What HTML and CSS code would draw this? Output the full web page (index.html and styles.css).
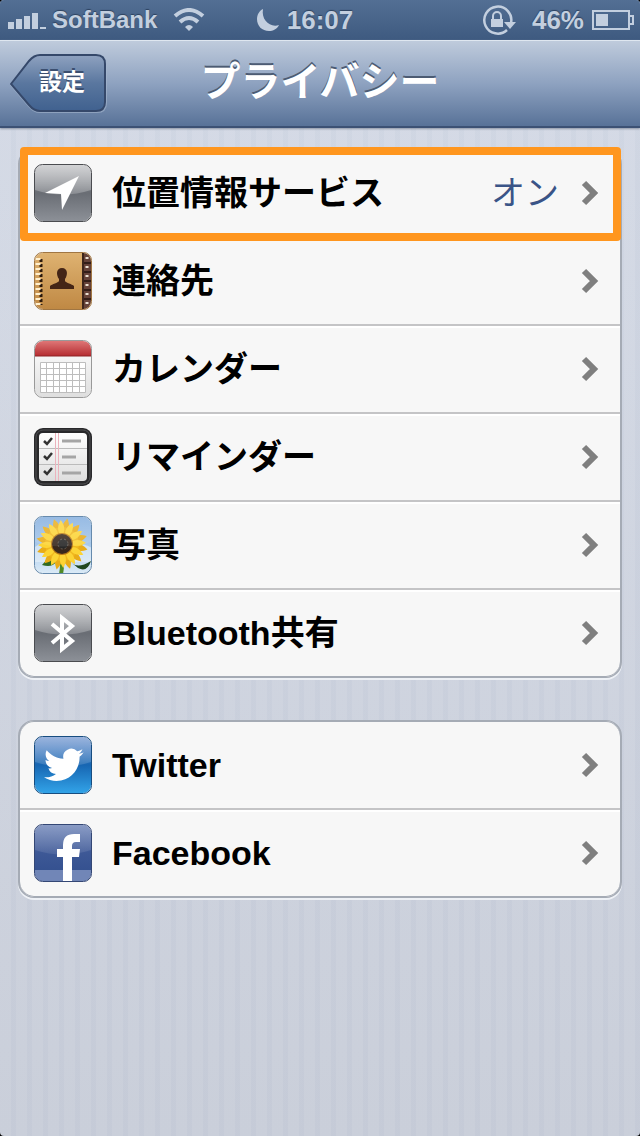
FILE: index.html
```html
<!DOCTYPE html>
<html lang="ja">
<head>
	<meta charset="UTF-8">
	<meta name="viewport" content="width=device-width, initial-scale=1.0">
	<link rel="stylesheet" href="styles.css">
	<title>プライバシー</title>
</head>
<body>
<svg class="defs" width="0" height="0" aria-hidden="true">
	<defs>
		<linearGradient id="gray" x2="0" y2="1"><stop offset="0" stop-color="#a5a7ab"/><stop offset=".5" stop-color="#696d74"/><stop offset="1" stop-color="#8c9097"/></linearGradient>
		<linearGradient id="gloss" x2="0" y2="1"><stop offset="0" stop-color="#fff" stop-opacity=".5"/><stop offset="1" stop-color="#fff" stop-opacity=".22"/></linearGradient>
		<linearGradient id="leather" x2="0" y2="1"><stop offset="0" stop-color="#dfb372"/><stop offset="1" stop-color="#bf8843"/></linearGradient>
		<linearGradient id="red" x2="0" y2="1"><stop offset="0" stop-color="#e17b7b"/><stop offset="1" stop-color="#b52c30"/></linearGradient>
		<linearGradient id="paper" x2="0" y2="1"><stop offset="0" stop-color="#fff"/><stop offset="1" stop-color="#dedede"/></linearGradient>
		<linearGradient id="sky" x2="0" y2="1"><stop offset="0" stop-color="#7da9dc"/><stop offset=".6" stop-color="#b2d0ee"/><stop offset="1" stop-color="#dcebf7"/></linearGradient>
		<linearGradient id="tw" x2="0" y2="1"><stop offset="0" stop-color="#6f93cf"/><stop offset=".5" stop-color="#1766b2"/><stop offset="1" stop-color="#32a3e8"/></linearGradient>
		<linearGradient id="fb" x2="0" y2="1"><stop offset="0" stop-color="#6e84b8"/><stop offset=".5" stop-color="#3d5896"/><stop offset="1" stop-color="#304d8c"/></linearGradient>
		<linearGradient id="back" x2="0" y2="1"><stop offset="0" stop-color="#8fa2c0"/><stop offset=".5" stop-color="#5a779f"/><stop offset="1" stop-color="#40618f"/></linearGradient>
		<path id="shine" d="M1 8a7 7 0 0 1 7-7h42a7 7 0 0 1 7 7v18Q29 35 1 26z" fill="url(#gloss)"/>
		<path id="petal" d="M0-8C-5-14-4-20 0-26 4-20 5-14 0-8z"/>
		<clipPath id="tile"><rect x="1" y="1" width="56" height="56" rx="8"/></clipPath>
	</defs>
</svg>
<div class="page">
	<div class="status">
		<div class="status-left">
			<svg width="38" height="20" viewBox="0 0 38 20"><path d="M0 12h6v7H0zM8 9h6v10H8zM16 6h6v13h-6zM24 3h6v16h-6zM32 17h6v2h-6z"/></svg>
			<span class="carrier">SoftBank</span>
			<svg width="32" height="24" viewBox="0 0 32 24"><path d="M16 23l-4-4q4-4 8 0z"/><g fill="none" stroke="#c3cfdf" stroke-width="4"><path d="M2 8Q16-4 30 8"/><path d="M7 14q9-8 18 0"/></g></svg>
		</div>
		<div class="status-mid">
			<svg width="22" height="22" viewBox="0 0 22 22"><path d="M6 0C2 2 0 6 0 10c0 7 5 12 12 12 4 0 8-2 10-6C13 19 4 11 6 0z"/></svg>
			<span>16:07</span>
		</div>
		<div class="status-right">
			<svg width="34" height="30" viewBox="0 0 34 30"><path d="M29 18A13.500 13.500 0 1 0 25 25" fill="none" stroke="#c3cfdf" stroke-width="2.500"/><path d="M22 17h12l-6 7z"/><path d="M9 14h12v8H9z"/><path d="M11 15v-4a4 4 0 0 1 8 0v4" fill="none" stroke="#c3cfdf" stroke-width="2"/></svg>
			<span>46%</span>
			<svg width="42" height="20" viewBox="0 0 42 20"><path d="M1 1h36v18H1zM38 6h3v8h-3" fill="none" stroke="#c3cfdf" stroke-width="2"/><path d="M4 4h12v12H4z"/></svg>
		</div>
	</div>
	<header class="navbar">
		<button class="back" type="button">
			<svg class="back-shape" width="98" height="60" viewBox="0 0 98 60"><path d="M1 31L19 8Q24 2 30 2h57q9 0 9 9v38q0 9-9 9H30q-6 0-11-6z" fill="none" stroke="#a6b7ce" stroke-opacity=".6" stroke-width="2"/><path d="M1 30L19 7Q24 1 30 1h56q9 0 9 9v38q0 9-9 9H30q-6 0-11-6z" fill="url(#back)" stroke="#35486a" stroke-width="2"/></svg>
			<span>設定</span>
		</button>
		<h1>プライバシー</h1>
	</header>
	<main>
		<nav class="group">
			<a class="row marked" href="#location">
				<svg class="icon" viewBox="0 0 58 58"><rect x="1" y="1" width="56" height="56" rx="8" fill="url(#gray)"/><use href="#shine"/><rect x=".5" y=".5" width="57" height="57" rx="8" fill="none" stroke="#4a4c50"/><path d="M45 12L28 46l-1-16-16-1z" fill="#fff"/></svg>
				<span class="name">位置情報サービス</span>
				<span class="value">オン</span>
				<svg class="arrow" viewBox="0 0 18 26"><path d="M3 3l10 10L3 23"/></svg>
			</a>
			<a class="row" href="#contacts">
				<svg class="icon" viewBox="0 0 58 58"><g clip-path="url(#tile)"><path d="M0 0h58v58H0z" fill="url(#leather)"/><path d="M49 0h9v58h-9z" fill="#654239"/><path d="M48 0h2v58h-2z" fill="#3d251b"/><path d="M50 11h8M50 20h8M50 29h8M50 38h8M50 47h8" stroke="#321d18" stroke-width="2"/><path d="M53 5v48" stroke="#eadfd2" stroke-width="3" stroke-dasharray="2 7"/></g><path d="M7 7v46" stroke="#2d1a0c" stroke-width="3" stroke-dasharray="3 2"/><path d="M4 6v47" stroke="#fff0cf" stroke-width="5" stroke-dasharray="2 3"/><path d="M16 37v-3c2-2 8-3 9-5v-2c-3-4-3-11 3-11s6 7 3 11v2c1 2 7 3 9 5v3z" fill="#442516"/><rect x=".5" y=".5" width="57" height="57" rx="8" fill="none" stroke="#a07643"/></svg>
				<span class="name">連絡先</span>
				<svg class="arrow" viewBox="0 0 18 26"><path d="M3 3l10 10L3 23"/></svg>
			</a>
			<a class="row" href="#calendar">
				<svg class="icon" viewBox="0 0 58 58"><g clip-path="url(#tile)"><path d="M0 0h58v58H0z" fill="url(#paper)"/><path d="M0 0h58v16H0z" fill="url(#red)"/><path d="M0 16h58" stroke="#8e2427"/></g><path d="M6.500 22.500h45v30h-45z" fill="#fff"/><path d="M6.500 22.500h45v30h-45zM6 28.500h45M6 34.500h45M6 40.500h45M6 46.500h45M12.500 22v30M19.500 22v30M25.500 22v30M32.500 22v30M38.500 22v30M45.500 22v30" fill="none" stroke="#bdbdbd"/><rect x=".5" y=".5" width="57" height="57" rx="8" fill="none" stroke="#999"/></svg>
				<span class="name">カレンダー</span>
				<svg class="arrow" viewBox="0 0 18 26"><path d="M3 3l10 10L3 23"/></svg>
			</a>
			<a class="row" href="#reminders">
				<svg class="icon" viewBox="0 0 58 58"><rect width="58" height="58" rx="9" fill="#29292b"/><rect x="2" y="2" width="54" height="54" rx="7" fill="none" stroke="#505053"/><rect x="5" y="5" width="48" height="48" rx="4" fill="url(#paper)"/><path d="M5 20.500h48M5 36.500h48" stroke="#bbb"/><path d="M21.500 5v48M24.500 5v48" stroke="#ecb3bd"/><path d="M28 13h19M28 29h14M28 45h19" stroke="#a5a5a5" stroke-width="3"/><path d="M10 13l3 3 5-6M10 28l3 3 5-6M10 43l3 3 5-6" fill="none" stroke="#333" stroke-width="2.500"/></svg>
				<span class="name">リマインダー</span>
				<svg class="arrow" viewBox="0 0 18 26"><path d="M3 3l10 10L3 23"/></svg>
			</a>
			<a class="row" href="#photos">
				<svg class="icon" viewBox="0 0 58 58"><g clip-path="url(#tile)"><path d="M0 0h58v58H0z" fill="url(#sky)"/><path d="M0 32q8-8 15-1t18 0 25 1v14H0z" fill="#e8f2fa" opacity=".6"/><path d="M27 40q2 8 0 18" fill="none" stroke="#4f8a25" stroke-width="4"/><path d="M26 48q-5-10-12-7-3 5-6 8 10 3 14-3z" fill="#2f6a22"/><path d="M38 47q6 6 19-2-4 12-13 7z" fill="#20481f"/>
					<g transform="translate(28 28)"><g fill="#e9ac18"><use href="#petal" transform="rotate(12)"/><use href="#petal" transform="rotate(42)"/><use href="#petal" transform="rotate(72)"/><use href="#petal" transform="rotate(102)"/><use href="#petal" transform="rotate(132)"/><use href="#petal" transform="rotate(162)"/><use href="#petal" transform="rotate(192)"/><use href="#petal" transform="rotate(222)"/><use href="#petal" transform="rotate(252)"/><use href="#petal" transform="rotate(282)"/><use href="#petal" transform="rotate(312)"/><use href="#petal" transform="rotate(342)"/></g>
					<circle r="17" fill="#f0b81f"/>
					<g fill="#fcd435" transform="scale(.92)"><use href="#petal" transform="rotate(-3)"/><use href="#petal" transform="rotate(27)"/><use href="#petal" transform="rotate(57)"/><use href="#petal" transform="rotate(87)"/><use href="#petal" transform="rotate(117)"/><use href="#petal" transform="rotate(147)"/><use href="#petal" transform="rotate(177)"/><use href="#petal" transform="rotate(207)"/><use href="#petal" transform="rotate(237)"/><use href="#petal" transform="rotate(267)"/><use href="#petal" transform="rotate(297)"/><use href="#petal" transform="rotate(327)"/></g>
					<circle r="11" fill="#b87918"/><circle r="10" fill="#38281d"/><circle cx="1" r="5" fill="#282828" stroke="#696057" stroke-dasharray="2 2"/></g></g><use href="#shine" opacity=".4"/><rect x=".5" y=".5" width="57" height="57" rx="8" fill="none" stroke="#668aad"/></svg>
				<span class="name">写真</span>
				<svg class="arrow" viewBox="0 0 18 26"><path d="M3 3l10 10L3 23"/></svg>
			</a>
			<a class="row" href="#bluetooth">
				<svg class="icon" viewBox="0 0 58 58"><rect x="1" y="1" width="56" height="56" rx="8" fill="url(#gray)"/><use href="#shine"/><rect x=".5" y=".5" width="57" height="57" rx="8" fill="none" stroke="#4a4c50"/><path d="M18 20l20 17-10 8V14l10 8-20 17" fill="none" stroke="#fff" stroke-width="4"/></svg>
				<span class="name">Bluetooth共有</span>
				<svg class="arrow" viewBox="0 0 18 26"><path d="M3 3l10 10L3 23"/></svg>
			</a>
		</nav>
		<nav class="group">
			<a class="row" href="#twitter">
				<svg class="icon" viewBox="0 0 58 58"><rect x="1" y="1" width="56" height="56" rx="8" fill="url(#tw)"/><use href="#shine" opacity=".6"/><rect x=".5" y=".5" width="57" height="57" rx="8" fill="none" stroke="#174d80"/><path transform="translate(10 9) scale(1.650)" fill="#fff" d="M23.953 4.570a10 10 0 0 1-2.825.775 4.958 4.958 0 0 0 2.163-2.723c-.951.555-2.005.959-3.127 1.184a4.920 4.920 0 0 0-8.384 4.482C7.690 8.095 4.067 6.130 1.640 3.162a4.822 4.822 0 0 0-.666 2.475c0 1.710.870 3.213 2.188 4.096a4.904 4.904 0 0 1-2.228-.616v.060a4.923 4.923 0 0 0 3.946 4.827 4.996 4.996 0 0 1-2.212.085 4.936 4.936 0 0 0 4.604 3.417 9.867 9.867 0 0 1-6.102 2.105c-.390 0-.779-.023-1.170-.067a13.995 13.995 0 0 0 7.557 2.209c9.053 0 13.998-7.496 13.998-13.985 0-.210 0-.420-.015-.630A9.935 9.935 0 0 0 24 4.590z"/></svg>
				<span class="name">Twitter</span>
				<svg class="arrow" viewBox="0 0 18 26"><path d="M3 3l10 10L3 23"/></svg>
			</a>
			<a class="row" href="#facebook">
				<svg class="icon" viewBox="0 0 58 58"><g clip-path="url(#tile)"><path d="M0 0h58v58H0z" fill="url(#fb)"/><path d="M0 46h58v12H0z" fill="#7186b7"/><use href="#shine" opacity=".4"/><path d="M29 57V33h-6v-8h6v-4q0-11 11-11h6v8h-4q-4 0-4 4v3h8l-1 8h-7v24z" fill="#fff"/></g><rect x=".5" y=".5" width="57" height="57" rx="8" fill="none" stroke="#344775"/></svg>
				<span class="name">Facebook</span>
				<svg class="arrow" viewBox="0 0 18 26"><path d="M3 3l10 10L3 23"/></svg>
			</a>
		</nav>
	</main>
</div>
</body>
</html>
```

FILE: styles.css
```css
*{
	box-sizing:border-box;
}
html{
	background:#000;
}
body{
	margin:0;
	font-family:"Liberation Sans", "Noto Sans CJK JP", sans-serif;
	font-weight:bold;
}
svg{
	display:block;
	flex:none;
}
.defs{
	position:absolute;
}
.page{
	min-height:100vh;
	border-radius:4px;
	overflow:hidden;
	background:
		repeating-linear-gradient(90deg, rgba(255,255,255,0.04) 0 11px, rgba(120,140,170,0.03) 11px 16px),
		linear-gradient(#d4dae6, #c8cdd9);
}

/* status bar */
.status{
	display:grid;
	grid-template-columns:1fr auto 1fr;
	align-items:center;
	height:40px;
	padding:0 6px 0 8px;
	background:linear-gradient(#536f94, #3e5a80);
	color:#c3cfdf;
	font-size:26px;
	line-height:38px;
	text-shadow:0 -1px 1px #2d425f;
}
.status svg{
	fill:#c3cfdf;
}
.status-left, .status-mid, .status-right{
	display:flex;
	align-items:center;
	gap:8px;
}
.status-left{
	gap:6px;
}
.status-mid{
	padding-right:32px;
}
.carrier{
	margin-right:10px;
	font-size:24px;
}
.status-right{
	justify-content:flex-end;
}
.status-right span{
	margin-left:8px;
}

/* title bar */
.navbar{
	display:grid;
	grid-template-columns:1fr auto 1fr;
	align-items:center;
	height:88px;
	padding:0 10px 4px;
	background:linear-gradient(#bfcbdc, #8ea2c0 50%, #587298);
	border-top:1px solid #dfe7f0;
	border-bottom:2px solid #3c5174;
	box-shadow:0 1px 2px #8b95a5;
}
.navbar h1{
	margin:0;
	color:#fff;
	font-size:40px;
	line-height:60px;
	text-shadow:0 -2px 0 #4c5b73;
}
.back{
	position:relative;
	width:98px;
	height:60px;
	margin-top:4px;
	padding:0 0 4px 6px;
	background:none;
	border:0;
	color:#fff;
	font:inherit;
	font-size:23px;
	line-height:56px;
	text-shadow:0 -2px 0 #3b4f70;
}
.back-shape{
	position:absolute;
	left:0;
	top:0;
}
.back span{
	position:relative;
}

/* lists */
main{
	display:grid;
	gap:42px;
	padding:20px 18px;
}
.group{
	background:#f7f7f7;
	border:solid #a5abb5;
	border-width:1px 2px;
	border-radius:16px;
	box-shadow:inset 0 1px 0 #a5abb5, inset 0 -1px 0 #a5abb5, 0 2px 0 #eef1f6;
}
.row{
	position:relative;
	display:flex;
	align-items:center;
	height:88px;
	padding:0 21px 0 14px;
	color:#000;
	font-size:34px;
	line-height:50px;
	text-decoration:none;
}
.row + .row{
	box-shadow:inset 0 1px 0 #c4c4c6, inset 0 3px 0 #fff;
}
.row:not(:last-child){
	border-bottom:1px solid #c4c4c6;
}
.icon{
	width:58px;
	height:58px;
	margin-right:20px;
}
.name{
	flex:1;
}
.value{
	margin-right:22px;
	color:#3a5487;
	font-weight:normal;
}
.arrow{
	width:18px;
	height:26px;
	fill:none;
	stroke:#7f7f7f;
	stroke-width:6;
}
/* orange frame round the first row */
.marked::after{
	content:"";
	position:absolute;
	z-index:1;
	top:-2px;
	right:-1px;
	bottom:-5px;
	left:0;
	border:8px solid #ff961e;
	border-radius:4px;
}
```
